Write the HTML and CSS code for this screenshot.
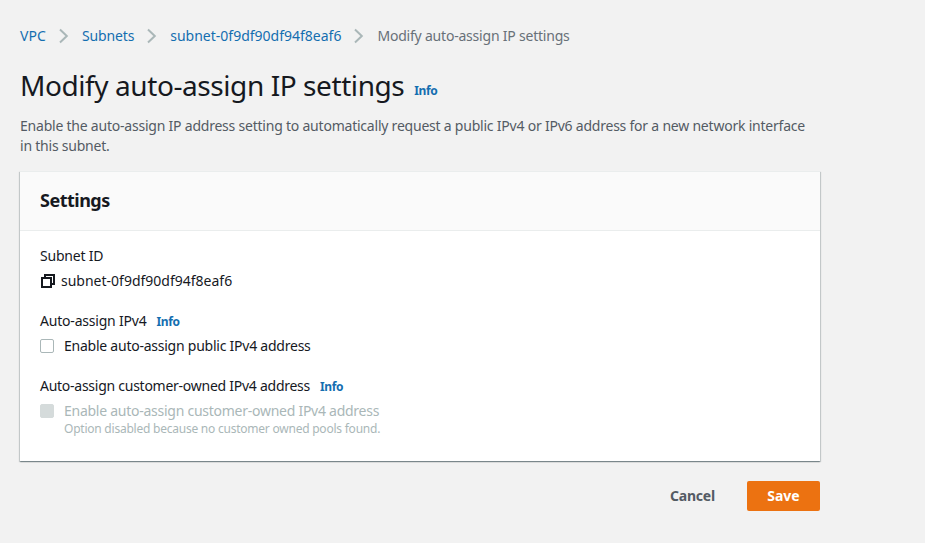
FILE: index.html
```
<!DOCTYPE html>
<html lang="en">
<head>
<meta charset="utf-8">
<title>Modify auto-assign IP settings</title>
<link rel="stylesheet" href="styles.css">
</head>
<body>
<main class="page">
  <nav class="breadcrumbs">
    <a class="crumb-vpc">VPC</a>
    <svg class="chevron" viewBox="0 0 10 16"><path d="M1 1.5 7.8 8 1 14.5"/></svg>
    <a class="crumb-subnets">Subnets</a>
    <svg class="chevron" viewBox="0 0 10 16"><path d="M1 1.5 7.8 8 1 14.5"/></svg>
    <a class="crumb-id">subnet-0f9df90df94f8eaf6</a>
    <svg class="chevron" viewBox="0 0 10 16"><path d="M1 1.5 7.8 8 1 14.5"/></svg>
    <span class="crumb-current">Modify auto-assign IP settings</span>
  </nav>
  <header class="heading">
    <h1>Modify auto-assign IP settings</h1>
    <a class="info">Info</a>
  </header>
  <p class="description"><span class="line-one">Enable the auto-assign IP address setting to automatically request a public IPv4 or IPv6 address for a new network interface</span><br><span class="line-two">in this subnet.</span></p>
  <section class="card">
    <div class="card-header"><h2>Settings</h2></div>
    <div class="card-body">
      <div class="field">
        <div class="row label"><span class="label-subnet">Subnet ID</span></div>
        <div class="row value">
          <svg class="copy" viewBox="0 0 14 14"><path d="M1 4h9v9H1zM4 4V1h9v9h-3"/></svg>
          <span class="subnet-id">subnet-0f9df90df94f8eaf6</span>
        </div>
      </div>
      <div class="field">
        <div class="row label"><span class="label-ipv4">Auto-assign IPv4</span><a class="info">Info</a></div>
        <label class="row value"><span class="box"></span><span class="option-public">Enable auto-assign public IPv4 address</span></label>
      </div>
      <div class="field">
        <div class="row label"><span class="label-owned">Auto-assign customer-owned IPv4 address</span><a class="info">Info</a></div>
        <label class="row value disabled"><span class="box"></span><span class="option-owned">Enable auto-assign customer-owned IPv4 address</span></label>
        <div class="hint"><span class="hint-text">Option disabled because no customer owned pools found.</span></div>
      </div>
    </div>
  </section>
  <div class="actions">
    <button class="button cancel"><span>Cancel</span></button>
    <button class="button save"><span>Save</span></button>
  </div>
</main>
</body>
</html>
```
FILE: styles.css
```
* { box-sizing: border-box; }
body {
  margin: 0;
  background: #f2f2f2;
  color: #16191f;
  font: 14px/20px "Noto Sans", sans-serif;
}
.page { width: 820px; padding: 26px 0 0 20px; }
h1, h2, p { margin: 0; font-weight: 400; }
a { color: #146eb0; }
span, a, h1, h2 { white-space: nowrap; }
.breadcrumbs { display: flex; align-items: center; height: 20px; color: #687078; }
.crumb-vpc { letter-spacing: .1px; }
.crumb-subnets { letter-spacing: -.15px; }
.crumb-current { letter-spacing: -.21px; }
.chevron { flex: none; width: 10px; height: 16px; margin: 0 13px 0 13px; fill: none; stroke: #aab7b8; stroke-width: 2; }
.heading { display: flex; align-items: baseline; height: 36px; margin-top: 21px; }
h1 { font-size: 28px; line-height: 36px; letter-spacing: -.42px; }
.info { margin-left: 10px; font-size: 12px; font-weight: 700; letter-spacing: -.4px; }
.heading .info { position: relative; top: -1px; }
.label .info { position: relative; top: 1px; }
.description { margin-top: 13px; color: #545b64; }
.line-one { letter-spacing: -.22px; }
.line-two { letter-spacing: -.22px; }
.card {
  height: 290px;
  margin-top: 15px;
  background: #fff;
  box-shadow: 0 1px 1px 0 rgba(0, 28, 36, .3), 1px 1px 1px 0 rgba(0, 28, 36, .15), -1px 1px 1px 0 rgba(0, 28, 36, .15);
  border-top: 1px solid #eaeded;
}
.card-header { height: 59px; padding: 17px 20px; background: #fafafa; border-bottom: 1px solid #eaeded; }
h2 { font-size: 18px; line-height: 22px; font-weight: 700; letter-spacing: -.5px; }
.card-body { padding: 15px 20px; }
.field { height: 65px; }
.row { display: flex; align-items: center; height: 20px; }
.value { margin-top: 5px; }
.label-subnet, .label-ipv4 { letter-spacing: -.2px; }
.label-owned, .option-owned { letter-spacing: -.26px; }
.option-public { letter-spacing: -.24px; }
.copy { width: 14px; height: 14px; margin: 0 6px 0 1px; fill: none; stroke: #16191f; stroke-width: 2; }
.box { flex: none; width: 14px; height: 14px; margin-right: 10px; border: 1px solid #aab7b8; border-radius: 2px; background: #fff; }
.disabled, .hint { color: #aab7b8; }
.disabled .box { border-color: #d5dbdb; background: #d5dbdb; }
.hint { padding-left: 24px; font-size: 12px; line-height: 16px; letter-spacing: -.23px; }
.actions { display: flex; justify-content: flex-end; margin-top: 20px; }
.button { height: 30px; padding: 0; border: 0; border-radius: 2px; font: 700 14px/20px "Noto Sans", sans-serif; background: none; color: #545b64; }
.cancel { margin-right: 32px; letter-spacing: -.2px; }
.save { width: 73px; background: #ec7211; color: #fff; }
```
